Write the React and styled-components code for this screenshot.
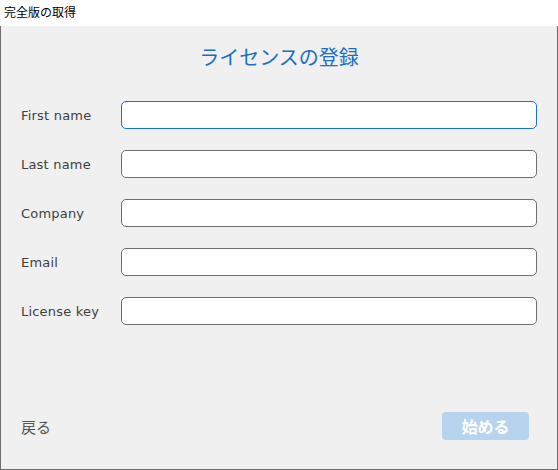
import React, { useState } from "react";
import styled, { createGlobalStyle } from "styled-components";

const fields = [
  { id: "first", label: "First name" },
  { id: "last", label: "Last name" },
  { id: "company", label: "Company" },
  { id: "email", label: "Email" },
  { id: "key", label: "License key" },
];

const App = () => {
  const [values, setValues] = useState({});
  const handleChange = (id) => (e) => {
    setValues({ ...values, [id]: e.target.value });
  };
  return (
    <>
      <GlobalStyle />
      <Window>
        <TitleBar>完全版の取得</TitleBar>
        <Body>
          <Heading>ライセンスの登録</Heading>
          <Form>
            {fields.map((f, i) => (
              <Row key={f.id}>
                <Label htmlFor={f.id}>{f.label}</Label>
                <Input
                  id={f.id}
                  $focused={i === 0}
                  value={values[f.id] || ""}
                  onChange={handleChange(f.id)}
                />
              </Row>
            ))}
          </Form>
          <Footer>
            <BackLink>戻る</BackLink>
            <StartButton disabled>始める</StartButton>
          </Footer>
        </Body>
      </Window>
    </>
  );
};

export default App;

const GlobalStyle = createGlobalStyle`
  html, body {
    margin: 0;
    padding: 0;
    background: #f0f0f0;
  }
  body {
    font-family: "Noto Sans CJK JP", "Noto Sans", sans-serif;
  }
`;

const Window = styled.div`
  width: 558px;
  height: 470px;
  display: flex;
  flex-direction: column;
  box-sizing: border-box;
`;

const TitleBar = styled.div`
  height: 26px;
  background: #ffffff;
  font-size: 12px;
  color: #000;
  padding-left: 4px;
  display: flex;
  align-items: center;
  line-height: 1;
  padding-bottom: 2px;
  box-sizing: border-box;
`;

const Body = styled.div`
  flex: 1;
  display: flex;
  flex-direction: column;
  background: #f0f0f0;
  border: 1px solid #6e6e6e;
  border-top: none;
`;

const Heading = styled.h1`
  margin: 16px 0 0;
  text-align: center;
  font-size: 20px;
  font-weight: 400;
  color: #1a6fc4;
  line-height: 30px;
`;

const Form = styled.div`
  display: flex;
  flex-direction: column;
  gap: 21px;
  margin-top: 29px;
  padding: 0 20px 0 20px;
`;

const Row = styled.div`
  display: flex;
  align-items: center;
`;

const Label = styled.label`
  width: 100px;
  font-size: 13px;
  color: #3f3f3f;
  font-family: "DejaVu Sans", "Noto Sans", sans-serif;
  letter-spacing: 0.2px;
`;

const Input = styled.input`
  flex: 1;
  height: 28px;
  box-sizing: border-box;
  border: 1px solid ${(p) => (p.$focused ? "#1874d0" : "#6f6f6f")};
  border-radius: 5px;
  background: #fff;
  outline: none;
  padding: 0 6px;
  font-size: 13px;
`;

const Footer = styled.div`
  margin-top: auto;
  display: flex;
  justify-content: space-between;
  align-items: center;
  padding: 0 28px 29px 20px;
`;

const BackLink = styled.span`
  font-size: 15px;
  color: #555;
  cursor: pointer;
`;

const StartButton = styled.button`
  width: 87px;
  height: 28px;
  border: none;
  border-radius: 4px;
  background: #b6d4ee;
  color: #fff;
  font-size: 16px;
  font-weight: 700;
  font-family: "Noto Sans CJK JP", sans-serif;
  padding: 0;
`;
